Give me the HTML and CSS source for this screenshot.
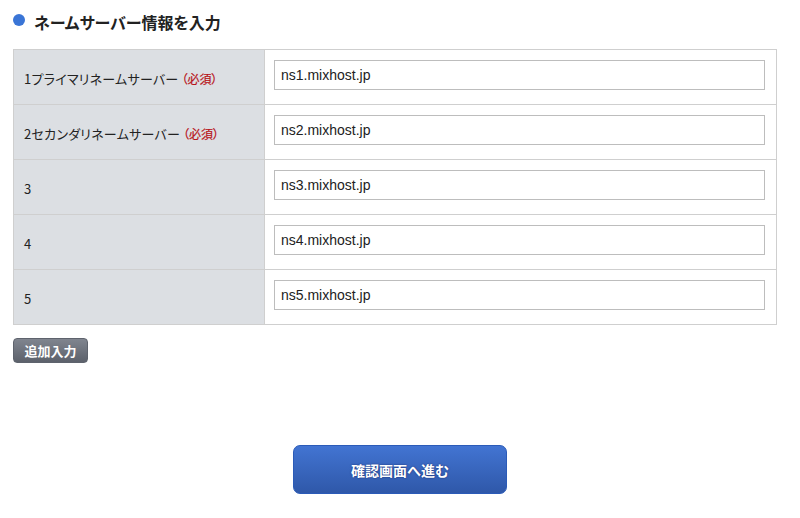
FILE: index.html
```html
<!DOCTYPE html>
<html lang="ja">
<head>
<meta charset="utf-8">
<link rel="stylesheet" href="styles.css">
</head>
<body>
<div class="page">
  <h2 class="title"><span class="dot"></span>ネームサーバー情報を入力</h2>
  <table class="ns-table">
    <tr>
      <th>1プライマリネームサーバー<span class="req">（必須）</span></th>
      <td><input class="ns-input" type="text" value="ns1.mixhost.jp"></td>
    </tr>
    <tr>
      <th>2セカンダリネームサーバー<span class="req">（必須）</span></th>
      <td><input class="ns-input" type="text" value="ns2.mixhost.jp"></td>
    </tr>
    <tr>
      <th>3</th>
      <td><input class="ns-input" type="text" value="ns3.mixhost.jp"></td>
    </tr>
    <tr>
      <th>4</th>
      <td><input class="ns-input" type="text" value="ns4.mixhost.jp"></td>
    </tr>
    <tr>
      <th>5</th>
      <td><input class="ns-input" type="text" value="ns5.mixhost.jp"></td>
    </tr>
  </table>
  <button class="add-btn" type="button">追加入力</button>
  <div class="submit-row">
    <button class="submit-btn" type="button">確認画面へ進む</button>
  </div>
</div>
</body>
</html>
```

FILE: styles.css
```css
* { box-sizing: border-box; }
html, body { margin: 0; padding: 0; background: #fff; }
body {
  font-family: "Liberation Sans", "Noto Sans CJK JP", sans-serif;
  color: #222;
}
.page {
  padding: 12px 24px 0 13px;
}
.title {
  display: flex;
  align-items: center;
  margin: 0 0 18px 0;
  height: 19px;
  font-family: "Noto Sans CJK JP", sans-serif;
  font-size: 16px;
  font-weight: bold;
  color: #222;
  font-feature-settings: "palt";
}
.dot {
  width: 12px;
  height: 12px;
  border-radius: 50%;
  background: #3a75d6;
  margin: -3px 9px 0 0;
}
.ns-table {
  width: 764px;
  border-collapse: collapse;
  border: 1px solid #c9c9c9;
}
.ns-table th,
.ns-table td {
  border: 1px solid #cfcfcf;
  height: 55px;
}
.ns-table th {
  width: 251px;
  background: #dcdfe3;
  text-align: left;
  vertical-align: middle;
  font-weight: normal;
  font-family: "Noto Sans CJK JP", sans-serif;
  font-feature-settings: "palt";
  font-size: 13px;
  letter-spacing: 0.25px;
  color: #222;
  padding: 3px 0 0 10px;
  white-space: nowrap;
}
.req {
  color: #b8141a;
  font-size: 12px;
  letter-spacing: 0;
  margin-left: 3px;
  -webkit-text-stroke: 0.2px #b8141a;
}
.ns-table td {
  vertical-align: top;
  padding: 10px 11px 0 9px;
  background: #fff;
}
.ns-input {
  display: block;
  width: 491px;
  height: 30px;
  border: 1px solid #bdbdbd;
  padding: 0 6px;
  font-family: "Liberation Sans", sans-serif;
  font-size: 14px;
  color: #222;
  background: #fff;
}
.add-btn {
  display: block;
  margin-top: 13px;
  width: 75px;
  height: 25px;
  border: 1px solid #5e636d;
  border-radius: 4px;
  background: linear-gradient(#80858f, #5c616b);
  color: #fff;
  font-family: "Noto Sans CJK JP", sans-serif;
  font-size: 13px;
  font-weight: bold;
  padding: 0;
}
.submit-row {
  display: flex;
  justify-content: center;
  margin-top: 82px;
  margin-left: 11px;
}
.submit-btn {
  width: 214px;
  height: 49px;
  border: 1px solid #2b5bb8;
  border-radius: 7px;
  background: linear-gradient(#4274d2, #2f58a9);
  color: #fff;
  font-family: "Noto Sans CJK JP", sans-serif;
  font-size: 14px;
  font-weight: bold;
  text-shadow: 0 0 2px rgba(0, 0, 60, 0.6);
  padding: 0;
}
```
